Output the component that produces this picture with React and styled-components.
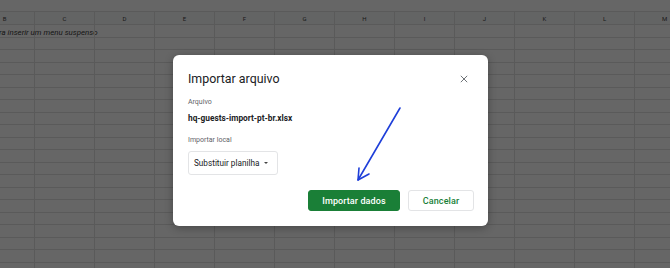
import React from "react";
import styled, { createGlobalStyle } from "styled-components";

const GlobalStyle = createGlobalStyle`
  html, body {
    margin: 0;
    padding: 0;
    width: 670px;
    height: 268px;
    overflow: hidden;
    font-family: Roboto, "Liberation Sans", sans-serif;
  }
`;

const Page = styled.div`
  position: relative;
  width: 670px;
  height: 268px;
  overflow: hidden;
  background: #ffffff;
`;

// spreadsheet underneath the modal
const Sheet = styled.div`
  display: flex;
  flex-direction: column;
  padding-top: 11px;
`;

const Row = styled.div`
  display: flex;
  margin-left: -25px;
  height: ${(p) => (p.header ? "14px" : "12.5px")};
  box-sizing: border-box;
  border-bottom: 1px solid #e1e1e1;
  background: ${(p) => (p.header ? "#f8f9fa" : "#fff")};
  border-top: ${(p) => (p.header ? "1px solid #e1e1e1" : "none")};
`;

const Cell = styled.div`
  position: relative;
  flex: 0 0 60px;
  box-sizing: border-box;
  border-right: 1px solid #e1e1e1;
  display: flex;
  align-items: center;
  justify-content: ${(p) => (p.header ? "center" : "flex-start")};
  font-size: 6px;
  color: #444;
  overflow: visible;
  white-space: nowrap;
`;

const Hint = styled.span`
  position: absolute;
  left: 24px;
  top: 2px;
  line-height: 12px;
  font-style: italic;
  font-size: 7.9px;
  color: #3a3a3a;
`;

const Backdrop = styled.div`
  position: absolute;
  inset: 0;
  background: rgba(0, 0, 0, 0.6);
  display: flex;
  align-items: flex-start;
  padding: 55px 0 0 173px;
`;

const Dialog = styled.div`
  width: 315px;
  height: 171px;
  box-sizing: border-box;
  background: #fff;
  border-radius: 6px;
  box-shadow: 0 2px 8px rgba(0, 0, 0, 0.3);
  padding: 16px 14px 15px 15px;
  display: flex;
  flex-direction: column;
`;

const Header = styled.div`
  display: flex;
  align-items: center;
  justify-content: space-between;
  height: 16px;
`;

const Title = styled.div`
  font-size: 12.4px;
  line-height: 16px;
  color: #202124;
`;

const Close = styled.button`
  width: 20px;
  height: 16px;
  border: none;
  background: none;
  padding: 0;
  display: flex;
  align-items: center;
  justify-content: center;
`;

const Label = styled.div`
  font-size: 7px;
  line-height: 9px;
  color: #5f6368;
  margin-top: ${(p) => p.gap}px;
`;

const FileName = styled.div`
  font-size: 8.3px;
  line-height: 12px;
  font-weight: 700;
  color: #202124;
  margin-top: 5px;
`;

const Select = styled.div`
  margin-top: 6px;
  width: 90px;
  height: 24px;
  box-sizing: border-box;
  border: 1px solid #e3e4e6;
  border-radius: 3px;
  display: flex;
  align-items: center;
  padding-left: 5px;
  gap: 5px;
  font-size: 8.2px;
  color: #202124;
`;

const Caret = styled.span`
  width: 0;
  height: 0;
  border-left: 2.5px solid transparent;
  border-right: 2.5px solid transparent;
  border-top: 2.5px solid #444;
`;

const Actions = styled.div`
  margin-top: auto;
  display: flex;
  justify-content: flex-end;
  gap: 8px;
`;

const Button = styled.button`
  height: 21px;
  width: ${(p) => p.w}px;
  box-sizing: border-box;
  border-radius: 3px;
  font-family: Roboto, "Liberation Sans", sans-serif;
  font-size: 9px;
  font-weight: 500;
  letter-spacing: 0.1px;
  padding: 0;
  background: ${(p) => (p.primary ? "#1a7f37" : "#fff")};
  color: ${(p) => (p.primary ? "#fff" : "#188038")};
  border: 1px solid ${(p) => (p.primary ? "#1a7f37" : "#e3e4e6")};
`;

const Annotation = styled.svg`
  position: absolute;
  inset: 0;
  pointer-events: none;
`;

const cols = ["B", "C", "D", "E", "F", "G", "H", "I", "J", "K", "L", "M"];

export default function App() {
  const rows = Array.from({ length: 20 });
  return (
    <>
      <GlobalStyle />
      <Page>
        <Sheet>
          <Row header>
            {cols.map((c) => (
              <Cell header key={c}>
                {c}
              </Cell>
            ))}
          </Row>
          {rows.map((_, i) => (
            <Row key={i}>
              {cols.map((c, j) => (
                <Cell key={c}>{i === 0 && j === 0 && <Hint>ra inserir um menu suspenso</Hint>}</Cell>
              ))}
            </Row>
          ))}
        </Sheet>
        <Backdrop>
          <Dialog>
            <Header>
              <Title>Importar arquivo</Title>
              <Close aria-label="Fechar">
                <svg width="8" height="8" viewBox="0 0 8 8">
                  <path d="M0.8 0.8 L7.2 7.2 M7.2 0.8 L0.8 7.2" stroke="#6f7378" strokeWidth="1" />
                </svg>
              </Close>
            </Header>
            <Label gap={11}>Arquivo</Label>
            <FileName>hq-guests-import-pt-br.xlsx</FileName>
            <Label gap={12}>Importar local</Label>
            <Select>
              Substituir planilha
              <Caret />
            </Select>
            <Actions>
              <Button primary w={92}>Importar dados</Button>
              <Button w={66}>Cancelar</Button>
            </Actions>
          </Dialog>
        </Backdrop>
        <Annotation width="670" height="268" viewBox="0 0 670 268">
          <path d="M400 108 L358 180" stroke="#1f3fd9" strokeWidth="1.6" strokeLinecap="round" fill="none" />
          <path d="M359 168 L358 180 L369 174" stroke="#1f3fd9" strokeWidth="1.6" strokeLinecap="round" strokeLinejoin="round" fill="none" />
        </Annotation>
      </Page>
    </>
  );
}
